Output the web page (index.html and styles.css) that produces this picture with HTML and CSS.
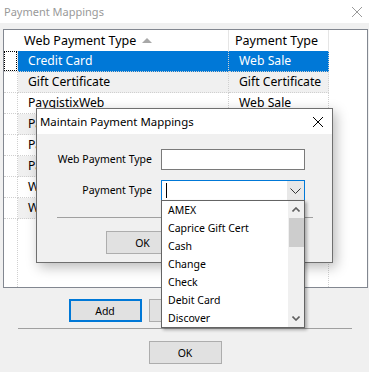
FILE: index.html
```html
<!DOCTYPE html>
<html lang="en">
<head>
  <meta charset="UTF-8">
  <meta name="viewport" content="width=device-width, initial-scale=1.0">
  <title>Payment Mappings</title>
  <link rel="stylesheet" href="styles.css">
</head>
<body>
  <div class="window">
    <!-- Title bar -->
    <div class="titlebar">
      <span class="title">Payment Mappings</span>
      <svg class="close" width="10" height="10" viewBox="0 0 10 10"><path d="M0 0L10 10M10 0L0 10" stroke="#9a9a9a" stroke-width="1"/></svg>
    </div>

    <div class="body">
      <!-- Grid -->
      <div class="grid">
        <div class="row head">
          <div class="cell rh"></div>
          <div class="cell">Web Payment Type<svg class="sort" width="10" height="5" viewBox="0 0 10 5"><polygon points="5,0 10,5 0,5" fill="#a8a8a8"/></svg></div>
          <div class="cell">Payment Type</div>
          <div class="cell blank"></div>
        </div>
        <div class="row selected">
          <div class="cell rh"><span class="focus"></span></div>
          <div class="cell">Credit Card</div>
          <div class="cell">Web Sale</div>
          <div class="cell blank"></div>
        </div>
        <div class="row alt">
          <div class="cell rh"></div>
          <div class="cell">Gift Certificate</div>
          <div class="cell">Gift Certificate</div>
          <div class="cell blank"></div>
        </div>
        <div class="row">
          <div class="cell rh"></div>
          <div class="cell">PaygistixWeb</div>
          <div class="cell">Web Sale</div>
          <div class="cell blank"></div>
        </div>
        <div class="row alt">
          <div class="cell rh"></div>
          <div class="cell">PayPal</div>
          <div class="cell">Web Sale</div>
          <div class="cell blank"></div>
        </div>
        <div class="row">
          <div class="cell rh"></div>
          <div class="cell">PayPal Express</div>
          <div class="cell">Web Sale</div>
          <div class="cell blank"></div>
        </div>
        <div class="row alt">
          <div class="cell rh"></div>
          <div class="cell">Payeezy</div>
          <div class="cell">Web Sale</div>
          <div class="cell blank"></div>
        </div>
        <div class="row">
          <div class="cell rh"></div>
          <div class="cell">Web Check</div>
          <div class="cell">Check</div>
          <div class="cell blank"></div>
        </div>
        <div class="row alt">
          <div class="cell rh"></div>
          <div class="cell">Web Gift Card</div>
          <div class="cell">Gift Certificate</div>
          <div class="cell blank"></div>
        </div>
        <div class="row fill">
          <div class="cell rh"></div>
          <div class="cell"></div>
          <div class="cell"></div>
          <div class="cell blank"></div>
        </div>
      </div>

      <div class="buttons">
        <button class="btn focused">Add</button>
        <button class="btn">Edit</button>
        <button class="btn">Delete</button>
      </div>
      <div class="separator"></div>
      <div class="buttons ok-row">
        <button class="btn">OK</button>
      </div>
    </div>

    <!-- Dialog -->
    <div class="dialog">
      <div class="dlg-title">
        <span>Maintain Payment Mappings</span>
        <svg width="10" height="10" viewBox="0 0 10 10"><path d="M0 0L10 10M10 0L0 10" stroke="#000" stroke-width="1"/></svg>
      </div>
      <div class="dlg-body">
        <div class="form">
          <label>Web Payment Type</label>
          <div class="textbox"></div>
          <label>Payment Type</label>
          <div class="combo">
            <span class="caret"></span>
            <span class="combo-btn">
              <svg width="11" height="6" viewBox="0 0 11 6"><path d="M0.5 0.5L5.5 5.5L10.5 0.5" fill="none" stroke="#333" stroke-width="1"/></svg>
            </span>
            <div class="dropdown">
              <ul class="items">
                <li>AMEX</li>
                <li>Caprice Gift Cert</li>
                <li>Cash</li>
                <li>Change</li>
                <li>Check</li>
                <li>Debit Card</li>
                <li>Discover</li>
              </ul>
              <div class="scrollbar">
                <span class="arrow">
                  <svg width="8" height="5" viewBox="0 0 8 5"><path d="M0.5 4.5L4 1L7.5 4.5" fill="none" stroke="#606060" stroke-width="1.6"/></svg>
                </span>
                <span class="thumb"></span>
                <span class="track"></span>
                <span class="arrow">
                  <svg width="8" height="5" viewBox="0 0 8 5"><path d="M0.5 0.5L4 4L7.5 0.5" fill="none" stroke="#606060" stroke-width="1.6"/></svg>
                </span>
              </div>
            </div>
          </div>
        </div>
        <div class="dlg-sep"></div>
        <div class="dlg-buttons">
          <button class="btn">OK</button>
          <button class="btn">Cancel</button>
        </div>
      </div>
    </div>
  </div>
</body>
</html>
```

FILE: styles.css
```css
* {
  margin: 0;
  padding: 0;
  box-sizing: border-box;
}

body {
  font-family: 'Noto Sans', 'Open Sans', sans-serif;
  background-color: #f0f0f0;
  color: #000;
}

.window {
  position: relative;
  width: 369px;
  height: 372px;
  background-color: #f0f0f0;
  overflow: hidden;
}

/* Barra de titulo */
.titlebar {
  height: 23px;
  background-color: #fff;
  display: flex;
  align-items: center;
  justify-content: space-between;
  padding: 0 7px 0 4px;
}

.title {
  color: #999;
  font-size: 11px;
}

/* Grade */
.grid {
  margin: 6px 0 0 3px;
  width: 365px;
  height: 259px;
  border: 1px solid #828790;
  background-color: #fff;
  display: flex;
  flex-direction: column;
}

.row {
  display: grid;
  grid-template-columns: 14px 211px 100px 1fr;
  height: 21px;
  font-size: 12.2px;
  line-height: 20px;
}

.row .cell {
  border-right: 1px dotted #d0d0d0;
  border-bottom: 1px dotted #d0d0d0;
  padding-left: 10px;
  white-space: nowrap;
  overflow: hidden;
}

.row .cell.rh {
  padding: 0;
  background-color: #fff;
}

.row .cell.blank {
  border: none;
}

.row.alt .cell {
  background-color: #f0f0f0;
}

.row.alt .cell.rh,
.row.alt .cell.blank {
  background-color: #fff;
}

.row.head {
  font-size: 12.5px;
  line-height: 21px;
}

.row.head .cell {
  border-bottom: none;
  border-right: 1px solid #e5e5e5;
  padding-left: 6px;
  display: flex;
  align-items: center;
}

.row.head .cell.rh {
  border-right: none;
}

.row.head .cell.blank {
  border: none;
}

.sort {
  margin-left: 6px;
  margin-top: -1px;
}

.row.selected .cell {
  background-color: #0078d7;
  color: #fff;
}

.row.selected .cell.rh,
.row.selected .cell.blank {
  background-color: #fff;
}

.focus {
  display: block;
  margin: 0 0 0 0;
  height: 20px;
  width: 13px;
  border: 1px dotted #000;
}

.row.fill {
  flex: 1;
}

.row.fill .cell {
  border-bottom: none;
}

/* Botoes */
.buttons {
  display: flex;
  justify-content: center;
  gap: 7px;
  margin-top: 11px;
  padding-left: 1px;
}

.btn {
  width: 73px;
  height: 23px;
  border: 1px solid #adadad;
  background-color: #e1e1e1;
  font-family: inherit;
  font-size: 10.5px;
  color: #000;
}

.btn.focused {
  border: 2px solid #0078d7;
}

.separator {
  margin: 6px 0 0 18px;
  width: 334px;
  height: 1px;
  background-color: #a0a0a0;
}

.ok-row {
  margin-top: 12px;
}

/* Dialogo */
.dialog {
  position: absolute;
  left: 36px;
  top: 108px;
  width: 297px;
  height: 155px;
  border: 1px solid #6f6f6f;
  background-color: #f0f0f0;
  box-shadow: 3px 4px 12px rgba(0, 0, 0, 0.28);
}

.dlg-title {
  height: 25px;
  background-color: #fff;
  display: flex;
  align-items: center;
  justify-content: space-between;
  padding: 0 9px 0 3px;
  font-size: 11.4px;
}

.dlg-body {
  padding-top: 15px;
}

.form {
  display: grid;
  grid-template-columns: 115px 144px;
  grid-auto-rows: 21px;
  column-gap: 9px;
  row-gap: 10px;
  font-size: 10.5px;
}

.form label {
  text-align: right;
  line-height: 21px;
}

.textbox {
  border: 1px solid #7a7a7a;
  background-color: #fff;
}

.combo {
  position: relative;
  border: 1px solid #0078d7;
  background-color: #fff;
  display: flex;
  align-items: center;
  justify-content: space-between;
}

.caret {
  width: 1px;
  height: 15px;
  margin-left: 4px;
  background-color: #000;
}

.combo-btn {
  width: 17px;
  height: 19px;
  background-color: #e8e8e8;
  display: flex;
  align-items: center;
  justify-content: center;
}

.dropdown {
  position: absolute;
  top: 100%;
  left: -1px;
  width: 144px;
  height: 128px;
  border: 1px solid #646464;
  background-color: #fff;
  display: flex;
  box-shadow: 2px 2px 3px rgba(0, 0, 0, 0.3);
  z-index: 2;
}

.items {
  flex: 1;
  list-style: none;
}

.items li {
  height: 18px;
  line-height: 18px;
  padding-left: 6px;
  font-size: 10.5px;
}

.scrollbar {
  width: 16px;
  background-color: #f0f0f0;
  display: flex;
  flex-direction: column;
}

.scrollbar .arrow {
  height: 17px;
  display: flex;
  align-items: center;
  justify-content: center;
}

.scrollbar .thumb {
  height: 29px;
  margin-left: 1px;
  background-color: #cdcdcd;
}

.scrollbar .track {
  flex: 1;
}

.dlg-sep {
  margin: 16px 0 0 20px;
  width: 256px;
  height: 1px;
  background-color: #a0a0a0;
}

.dlg-buttons {
  display: flex;
  gap: 7px;
  margin-top: 13px;
  padding-left: 69px;
}
```
